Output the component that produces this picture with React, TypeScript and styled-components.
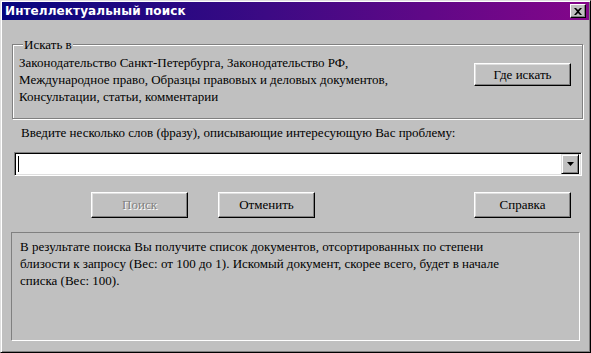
import React from 'react';
import styled, { createGlobalStyle } from 'styled-components';

const GlobalStyle = createGlobalStyle`
  html, body {
    margin: 0;
    padding: 0;
    background: #c0c0c0;
    font-family: "Liberation Serif", Tinos, "Times New Roman", serif;
    font-size: 13px;
  }
  button, legend, fieldset {
    font-family: inherit;
    font-size: inherit;
  }
`;

const Window = styled.div`
  width: 591px;
  height: 353px;
  box-sizing: border-box;
  background: #c0c0c0;
  border: 1px solid;
  border-color: #dfdfdf #000 #000 #dfdfdf;
  box-shadow: inset 1px 1px 0 #fff, inset -1px -1px 0 #808080;
  padding: 1px;
  display: flex;
  flex-direction: column;
  font-family: "Liberation Serif", Tinos, "Times New Roman", serif;
  font-size: 13px;
  color: #000;
  overflow: hidden;
`;

const TitleBar = styled.div`
  height: 18px;
  flex: none;
  display: flex;
  align-items: center;
  justify-content: space-between;
  padding: 0 3px;
  background: linear-gradient(90deg, #06067e 0%, #3c0a84 45%, #84068a 100%);
`;

const Title = styled.span`
  font-family: "DejaVu Sans", Verdana, sans-serif;
  font-weight: bold;
  font-size: 12px;
  color: #fff;
  letter-spacing: 0.1px;
`;

const CloseButton = styled.div`
  width: 16px;
  height: 14px;
  box-sizing: border-box;
  background: #c0c0c0;
  border: 1px solid;
  border-color: #fff #000 #000 #fff;
  box-shadow: inset -1px -1px 0 #808080;
  display: flex;
  align-items: center;
  justify-content: center;
`;

const Body = styled.div`
  display: flex;
  flex-direction: column;
  padding: 0 0 0 9px;
`;

const Group = styled.fieldset`
  margin: 17px 0 0 1px;
  width: 571px;
  height: 82px;
  box-sizing: border-box;
  border: 1px solid #808080;
  box-shadow: 1px 1px 0 #fff, inset 1px 1px 0 #fff;
  padding: 2px 11px 0 6px;
  display: flex;
  align-items: flex-start;
  justify-content: space-between;
`;

const Legend = styled.legend`
  padding: 0 1px;
  margin-left: 4px;
  line-height: 15px;
  background: #c0c0c0;
`;

const GroupText = styled.div`
  line-height: 17px;
  white-space: nowrap;
`;

const Button = styled.button<{ $h?: number }>`
  width: 97px;
  height: ${(p) => p.$h ?? 26}px;
  box-sizing: border-box;
  background: #c0c0c0;
  border: 1px solid;
  border-color: #fff #000 #000 #fff;
  box-shadow: inset -1px -1px 0 #808080, inset 1px 1px 0 #dfdfdf;
  color: #000;
  padding: 0;
  margin: 0;
  flex: none;

  &:disabled {
    color: #808080;
    text-shadow: 1px 1px 0 #fff;
  }
`;

const WhereButton = styled(Button)`
  margin-top: 9px;
`;

const Prompt = styled.div`
  margin: 5px 0 0 10px;
  line-height: 17px;
  white-space: nowrap;
`;

const Combo = styled.div`
  margin: 11px 0 0 3px;
  width: 568px;
  height: 24px;
  box-sizing: border-box;
  background: #fff;
  border: 1px solid;
  border-color: #808080 #fff #fff #808080;
  box-shadow: inset 1px 1px 0 #000, inset -1px -1px 0 #dfdfdf;
  display: flex;
  align-items: center;
  justify-content: space-between;
  padding: 2px;
`;

const Caret = styled.div`
  width: 1px;
  height: 16px;
  margin-left: 1px;
  background: #000;
`;

const ComboArrow = styled.div`
  width: 18px;
  height: 20px;
  box-sizing: border-box;
  background: #c0c0c0;
  border: 1px solid;
  border-color: #dfdfdf #000 #000 #dfdfdf;
  box-shadow: inset 1px 1px 0 #fff, inset -1px -1px 0 #808080;
  display: flex;
  align-items: center;
  justify-content: center;
`;

const ButtonRow = styled.div`
  margin: 16px 0 0 0;
  display: flex;
  align-items: center;
  padding-left: 80px;
  gap: 30px;
`;

const Spacer = styled.div`
  flex: 1;
`;

const RightButton = styled(Button)`
  margin-right: 18px;
`;

const Info = styled.div`
  margin: 14px 0 0 0;
  width: 569px;
  height: 109px;
  box-sizing: border-box;
  border: 1px solid;
  border-color: #808080 #fff #fff #808080;
  padding: 5px 8px;
  line-height: 17px;
  white-space: nowrap;
`;

export default function App() {
  return (
    <>
      <GlobalStyle />
      <Window>
        <TitleBar>
          <Title>Интеллектуальный поиск</Title>
          <CloseButton>
            <svg width="8" height="7" viewBox="0 0 8 7">
              <path d="M0 0h2l2 2 2-2h2L5 3.5 8 7H6L4 5 2 7H0l3-3.5z" fill="#000" />
            </svg>
          </CloseButton>
        </TitleBar>
        <Body>
          <Group>
            <Legend>Искать в</Legend>
            <GroupText>
              Законодательство Санкт-Петербурга, Законодательство РФ,
              <br />
              Международное право, Образцы правовых и деловых документов,
              <br />
              Консультации, статьи, комментарии
            </GroupText>
            <WhereButton $h={23}>Где искать</WhereButton>
          </Group>
          <Prompt>Введите несколько слов (фразу), описывающие интересующую Вас проблему:</Prompt>
          <Combo>
            <Caret />
            <ComboArrow>
              <svg width="7" height="4" viewBox="0 0 7 4">
                <path d="M0 0h7L3.5 4z" fill="#000" />
              </svg>
            </ComboArrow>
          </Combo>
          <ButtonRow>
            <Button disabled>Поиск</Button>
            <Button>Отменить</Button>
            <Spacer />
            <RightButton>Справка</RightButton>
          </ButtonRow>
          <Info>
            В результате поиска Вы получите список документов, отсортированных по степени
            <br />
            близости к запросу (Вес: от 100 до 1). Искомый документ, скорее всего, будет в начале
            <br />
            списка (Вес: 100).
          </Info>
        </Body>
      </Window>
    </>
  );
}
